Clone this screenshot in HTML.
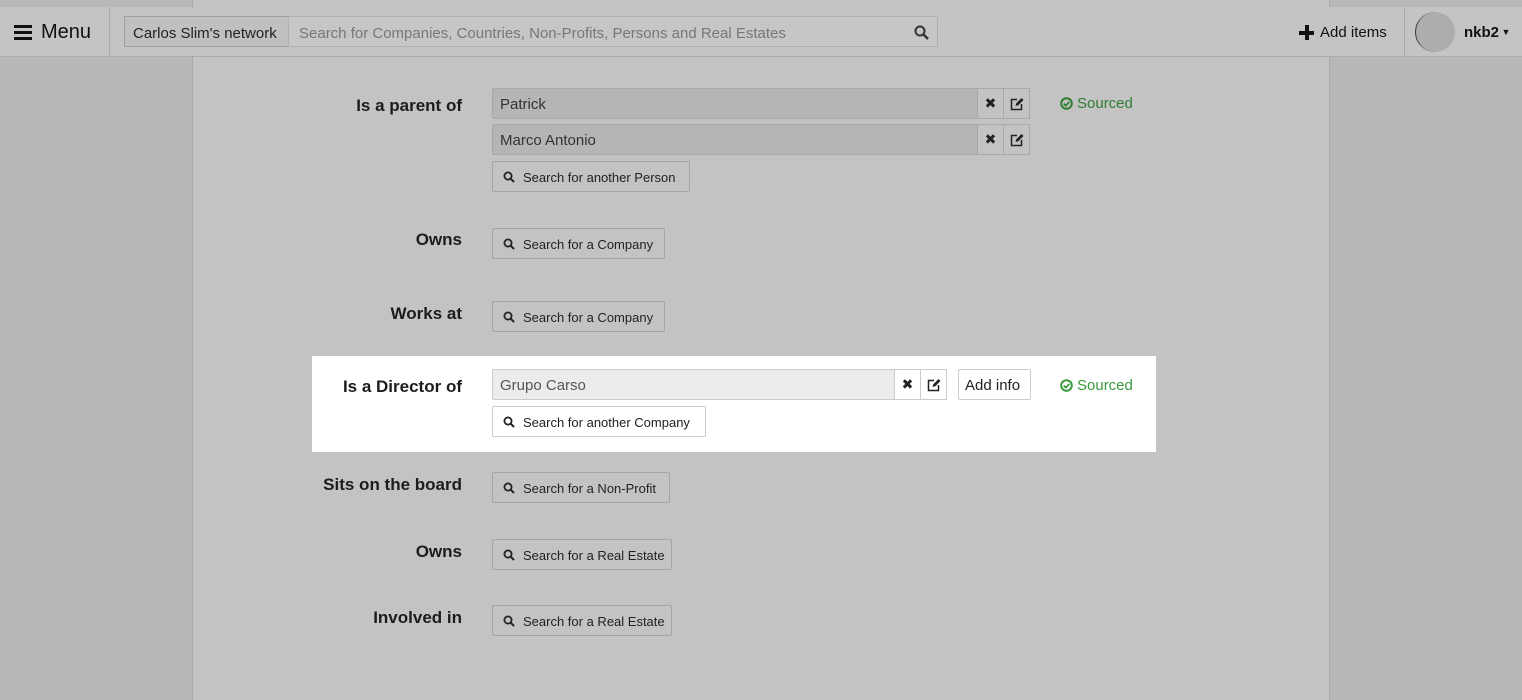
<!DOCTYPE html>
<html><head><style>
*{box-sizing:border-box;margin:0;padding:0}
body{width:1522px;height:688px;background:#b8b8b8;font-family:"Liberation Sans","DejaVu Sans",sans-serif;color:#222;position:relative;overflow:hidden}
.a{position:absolute;white-space:nowrap}
.hdr{left:0;top:7px;width:1522px;height:50px;background:#c4c4c4;border-bottom:1px solid #aaa}
.panel{left:192px;top:0;width:1138px;height:700px;background:#c3c3c3;border-left:1px solid #aaa;border-right:1px solid #aaa}
.lbl{width:300px;text-align:right;font-weight:bold;font-size:17px;color:#1c1c1c;left:162px}
.inp{left:492px;height:31px;width:486px;background:#b5b5b5;border:1px solid #a8a8a8;border-radius:2px 0 0 2px;font-size:15px;color:#333;padding:7px 0 0 7px}
.ib{height:31px;width:27px;border:1px solid #a8a8a8;background:#c3c3c3;display:flex;align-items:center;justify-content:center}
.btn{left:492px;height:31px;border:1px solid #a5a5a5;border-radius:2px;background:#c3c3c3;font-size:13px;color:#222;padding:8px 0 0 30px}
.btn svg{position:absolute;left:10px;top:9px}
.src{font-size:15px;color:#2e7d32;display:flex;align-items:center}
.src svg{margin-right:4px}
.w .inp{background:#ececec;border-color:#ccc;color:#555}
.w .ib,.w .btn{background:#fff;border-color:#ccc}
</style></head><body>
<div class="a panel"></div>
<div class="a hdr"></div>
<div class="a" style="left:109px;top:7px;width:1px;height:50px;background:#aaa"></div>
<div class="a" style="left:14px;top:31px;width:18px;height:3px;background:#111;box-shadow:0 -6px 0 #111,0 6px 0 #111"></div>
<div class="a" style="left:41px;top:21px;font-size:20px;color:#111">Menu</div>
<div class="a" style="left:124px;top:16px;width:165px;height:31px;border:1px solid #a0a0a0;background:#c0c0c0;font-size:15px;color:#222;padding:8px 0 0 8px">Carlos Slim's network</div>
<div class="a" style="left:288px;top:16px;width:650px;height:31px;border:1px solid #b0b0b0;background:#c6c6c6;font-size:15px;color:#777;padding:8px 0 0 10px">Search for Companies, Countries, Non-Profits, Persons and Real Estates</div>
<svg class="a" style="left:914px;top:25px" width="15" height="15" viewBox="0 0 15 15"><circle cx="6" cy="6" r="4.5" fill="none" stroke="#333" stroke-width="2"/><path d="M9.5 9.5L14 14" stroke="#333" stroke-width="2.4"/></svg>
<div class="a" style="left:1299px;top:25px;width:15px;height:15px"><div class="a" style="left:0;top:5.5px;width:15px;height:4px;background:#111"></div><div class="a" style="left:5.5px;top:0;width:4px;height:15px;background:#111"></div></div>
<div class="a" style="left:1320px;top:24px;font-size:15px;color:#111">Add items</div>
<div class="a" style="left:1404px;top:8px;width:1px;height:48px;background:#aaa"></div>
<div class="a" style="left:1415px;top:12px;width:40px;height:40px;border-radius:50%;background:#adadad;border-left:1px solid #333"></div>
<div class="a" style="left:1464px;top:24px;font-size:15px;font-weight:bold;color:#111">nkb2<span style="font-size:9px;vertical-align:2px"> ▼</span></div>

<div class="a lbl" style="top:96px">Is a parent of</div>
<div class="a inp" style="top:88px">Patrick</div>
<div class="a ib" style="left:977px;top:88px"><b style="font-size:14px">✖</b></div>
<div class="a ib" style="left:1003px;top:88px"><svg width="14" height="14" viewBox="0 0 14 14"><path d="M7 2.5H1.5v10h10V7" fill="none" stroke="#222" stroke-width="1.5"/><path d="M5.5 9l.8-2.8L11.5 1l2 2-5.2 5.2z" fill="#222"/></svg></div>
<div class="a inp" style="top:124px">Marco Antonio</div>
<div class="a ib" style="left:977px;top:124px"><b style="font-size:14px">✖</b></div>
<div class="a ib" style="left:1003px;top:124px"><svg width="14" height="14" viewBox="0 0 14 14"><path d="M7 2.5H1.5v10h10V7" fill="none" stroke="#222" stroke-width="1.5"/><path d="M5.5 9l.8-2.8L11.5 1l2 2-5.2 5.2z" fill="#222"/></svg></div>
<div class="a src" style="left:1060px;top:95px"><svg width="13" height="13" viewBox="0 0 13 13"><circle cx="6.5" cy="6.5" r="5.3" fill="none" stroke="currentColor" stroke-width="2"/><path d="M3.8 6.6l2 2 3.5-3.6" fill="none" stroke="currentColor" stroke-width="1.8"/></svg>Sourced</div>
<div class="a btn" style="top:161px;width:198px"><svg width="12" height="12" viewBox="0 0 12 12"><circle cx="5" cy="5" r="3.6" fill="none" stroke="#222" stroke-width="1.8"/><path d="M7.6 7.6L11 11" stroke="#222" stroke-width="2"/></svg>Search for another Person</div>

<div class="a lbl" style="top:230px">Owns</div>
<div class="a btn" style="top:228px;width:173px"><svg width="12" height="12" viewBox="0 0 12 12"><circle cx="5" cy="5" r="3.6" fill="none" stroke="#222" stroke-width="1.8"/><path d="M7.6 7.6L11 11" stroke="#222" stroke-width="2"/></svg>Search for a Company</div>
<div class="a lbl" style="top:304px">Works at</div>
<div class="a btn" style="top:301px;width:173px"><svg width="12" height="12" viewBox="0 0 12 12"><circle cx="5" cy="5" r="3.6" fill="none" stroke="#222" stroke-width="1.8"/><path d="M7.6 7.6L11 11" stroke="#222" stroke-width="2"/></svg>Search for a Company</div>

<div class="a w" style="left:312px;top:356px;width:844px;height:96px;background:#fff">
<div class="a lbl" style="left:-150px;top:21px">Is a Director of</div>
<div class="a inp" style="left:180px;top:13px;width:404px">Grupo Carso</div>
<div class="a ib" style="left:582px;top:13px"><b style="font-size:14px">✖</b></div>
<div class="a ib" style="left:608px;top:13px"><svg width="14" height="14" viewBox="0 0 14 14"><path d="M7 2.5H1.5v10h10V7" fill="none" stroke="#222" stroke-width="1.5"/><path d="M5.5 9l.8-2.8L11.5 1l2 2-5.2 5.2z" fill="#222"/></svg></div>
<div class="a" style="left:646px;top:13px;width:73px;height:31px;border:1px solid #ccc;border-radius:2px;font-size:15px;padding:7px 0 0 6px">Add info</div>
<div class="a src" style="left:748px;top:21px;color:#3a9a3e"><svg width="13" height="13" viewBox="0 0 13 13"><circle cx="6.5" cy="6.5" r="5.3" fill="none" stroke="currentColor" stroke-width="2"/><path d="M3.8 6.6l2 2 3.5-3.6" fill="none" stroke="currentColor" stroke-width="1.8"/></svg>Sourced</div>
<div class="a btn" style="left:180px;top:50px;width:214px"><svg width="12" height="12" viewBox="0 0 12 12"><circle cx="5" cy="5" r="3.6" fill="none" stroke="#222" stroke-width="1.8"/><path d="M7.6 7.6L11 11" stroke="#222" stroke-width="2"/></svg>Search for another Company</div>
</div>

<div class="a lbl" style="top:475px">Sits on the board</div>
<div class="a btn" style="top:472px;width:178px"><svg width="12" height="12" viewBox="0 0 12 12"><circle cx="5" cy="5" r="3.6" fill="none" stroke="#222" stroke-width="1.8"/><path d="M7.6 7.6L11 11" stroke="#222" stroke-width="2"/></svg>Search for a Non-Profit</div>
<div class="a lbl" style="top:542px">Owns</div>
<div class="a btn" style="top:539px;width:180px"><svg width="12" height="12" viewBox="0 0 12 12"><circle cx="5" cy="5" r="3.6" fill="none" stroke="#222" stroke-width="1.8"/><path d="M7.6 7.6L11 11" stroke="#222" stroke-width="2"/></svg>Search for a Real Estate</div>
<div class="a lbl" style="top:608px">Involved in</div>
<div class="a btn" style="top:605px;width:180px"><svg width="12" height="12" viewBox="0 0 12 12"><circle cx="5" cy="5" r="3.6" fill="none" stroke="#222" stroke-width="1.8"/><path d="M7.6 7.6L11 11" stroke="#222" stroke-width="2"/></svg>Search for a Real Estate</div>
</body></html>
